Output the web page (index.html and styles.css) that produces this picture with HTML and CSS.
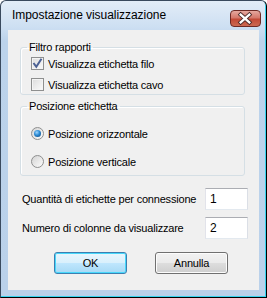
FILE: index.html
```html
<!DOCTYPE html>
<html>
<head>
<meta charset="utf-8">
<link rel="stylesheet" href="styles.css">
</head>
<body>
<div class="window">
  <div class="titlebar">
    <span class="title">Impostazione visualizzazione</span>
    <span class="close">
      <svg width="31" height="17" viewBox="0 0 31 17">
        <path d="M11 4.5 L20 12.5 M20 4.5 L11 12.5" stroke="#4a2a28" stroke-width="4.2" stroke-linecap="square"/>
        <path d="M11 4.5 L20 12.5 M20 4.5 L11 12.5" stroke="#ffffff" stroke-width="2.4" stroke-linecap="square"/>
      </svg>
    </span>
  </div>
  <div class="client">
    <fieldset class="group g1">
      <legend>Filtro rapporti</legend>
      <label class="opt"><span class="check on"><svg width="11" height="11" viewBox="0 0 11 11"><path d="M1.5 5 L4.3 8.8 L9.5 0.8" fill="none" stroke="#4c6194" stroke-width="2"/></svg></span>Visualizza etichetta filo</label>
      <label class="opt"><span class="check"></span>Visualizza etichetta cavo</label>
    </fieldset>
    <fieldset class="group g2">
      <legend>Posizione etichetta</legend>
      <label class="opt"><span class="radio on"><span class="dot"></span></span>Posizione orizzontale</label>
      <label class="opt"><span class="radio"></span>Posizione verticale</label>
    </fieldset>
    <div class="field">
      <span>Quantità di etichette per connessione</span>
      <span class="input">1</span>
    </div>
    <div class="field f2">
      <span>Numero di colonne da visualizzare</span>
      <span class="input">2</span>
    </div>
    <div class="buttons">
      <span class="btn default">OK</span>
      <span class="btn">Annulla</span>
    </div>
  </div>
</div>
</body>
</html>
```
FILE: styles.css
```css
html, body {
  margin: 0;
  padding: 0;
  background: #ffffff;
}
.window {
  box-sizing: border-box;
  width: 267px;
  height: 298px;
  border: 1px solid #3a4a5e;
  border-right-color: #000;
  border-bottom-color: #000;
  border-radius: 6px 6px 0 0;
  background: linear-gradient(#e3edf8 0px, #cddff2 26px, #bcd3eb 40px, #bad1ea 100%);
  box-shadow: inset -1px -1px 0 #36d3ee;
  padding: 0 6px 6px 7px;
  font-family: "Liberation Sans", Arial, sans-serif;
  font-size: 11px;
  color: #000;
}
.titlebar {
  height: 29px;
  display: flex;
  align-items: flex-start;
  justify-content: space-between;
}
.title {
  font-size: 12px;
  margin: 7px 0 0 4px;
  color: #000;
  letter-spacing: -0.05px;
}
.close {
  width: 31px;
  height: 17px;
  margin: 9px -1px 0 0;
  box-sizing: border-box;
  border: 1px solid #6d2a25;
  border-radius: 4px;
  background: linear-gradient(#e5a89f 0%, #d4786b 45%, #c24a37 55%, #cc6a52 100%);
  display: flex;
}
.close svg { margin: -1px 0 0 -1px; }
.client {
  box-sizing: border-box;
  width: 251px;
  height: 260px;
  background: #f0f0f0;
  padding: 11px 0 0 12px;
  letter-spacing: -0.2px;
}
.group {
  margin: 0;
  width: 225px;
  box-sizing: border-box;
  border: 1px solid #d5dfe5;
  border-radius: 3px;
  box-shadow: inset 1px 1px 0 #fff;
  padding: 0 0 0 10px;
}
.group legend {
  padding: 0 2px;
  margin-left: -4px;
  line-height: 13px;
}
.g1 { height: 54px; padding-top: 3px; }
.g2 { height: 76px; margin-top: 5px; padding-top: 14px; }
.opt {
  display: flex;
  align-items: center;
  height: 13px;
  gap: 4px;
}
.g1 .opt + .opt { margin-top: 8px; }
.g2 .opt + .opt { margin-top: 15px; }
.check {
  width: 13px;
  height: 13px;
  box-sizing: border-box;
  border: 1px solid #8e8f8f;
  background: linear-gradient(135deg, #dcdcdc, #fbfbfb);
  box-shadow: inset 0 0 0 1px #f4f4f4;
  display: flex;
  align-items: center;
  justify-content: center;
}
.radio {
  width: 13px;
  height: 13px;
  box-sizing: border-box;
  border: 1px solid #8e8f8f;
  border-radius: 50%;
  background: linear-gradient(135deg, #d4d4d4, #fcfcfc);
  display: flex;
  align-items: center;
  justify-content: center;
}
.radio .dot {
  width: 7px;
  height: 7px;
  border-radius: 50%;
  background: radial-gradient(circle at 40% 35%, #9fd6ff 0%, #2a8ad4 45%, #0d3f73 100%);
}
.field {
  display: flex;
  align-items: center;
  justify-content: space-between;
  width: 228px;
  padding-left: 2px;
  box-sizing: border-box;
  margin-top: 12px;
}
.f2 { margin-top: 7px; }
.input {
  width: 43px;
  height: 22px;
  box-sizing: border-box;
  border: 1px solid #abadb3;
  border-left-color: #e2e3ea;
  border-right-color: #dbdfe6;
  border-bottom-color: #e3e9ef;
  background: #fff;
  padding: 2px 0 0 4px;
  font-size: 12px;
  line-height: 16px;
}
.buttons {
  display: flex;
  gap: 28px;
  margin: 13px 0 0 34px;
}
.btn {
  width: 73px;
  height: 22px;
  box-sizing: border-box;
  border: 1px solid #707070;
  border-radius: 3px;
  background: linear-gradient(#f2f2f2 0%, #ebebeb 48%, #dddddd 52%, #cfcfcf 100%);
  box-shadow: inset 0 0 0 1px #fcfcfc;
  display: flex;
  align-items: center;
  justify-content: center;
  font-size: 11px;
}
.btn.default {
  border-color: #3c7fb1;
  background: linear-gradient(#eaf6fd 0%, #d9f0fc 48%, #bee6fd 52%, #a7d9f5 100%);
  box-shadow: inset 0 0 0 1px #48d8fb;
}
```
